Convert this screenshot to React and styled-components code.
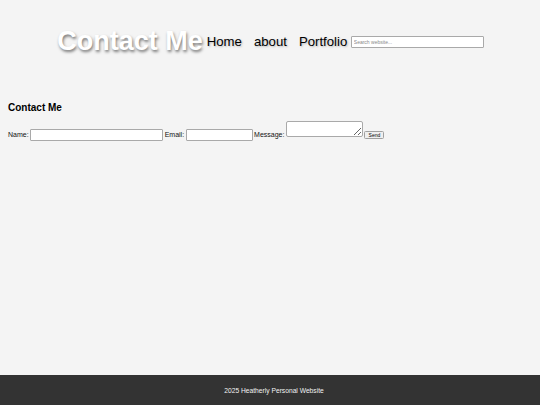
import React from 'react';
import styled, {createGlobalStyle} from 'styled-components';

const GlobalStyle = createGlobalStyle`
  html, body {
    margin: 0;
    padding: 0;
    background: #f4f4f4;
    font-family: "Liberation Sans", Arial, sans-serif;
  }
`;

const Page = styled.div`
  min-height: 100vh;
  display: flex;
  flex-direction: column;
`;

const Header = styled.header`
  display: flex;
  justify-content: center;
  align-items: center;
  padding: 26px 0 26px 1px;
`;

const Title = styled.h1`
  margin: 0 4px 0 0;
  font-size: 27px;
  font-weight: bold;
  line-height: 31px;
  color: #fff;
  text-shadow: 1px 2px 3px rgba(0, 0, 0, 0.5);
`;

const Nav = styled.nav`
  display: flex;
  gap: 12px;
  margin-right: 3.5px;
`;

const NavLink = styled.a`
  font-size: 13.2px;
  line-height: 16px;
  color: #000;
  text-decoration: none;
  text-shadow: 1px 1px 2px rgba(0, 0, 0, 0.25);
`;

const Search = styled.input`
  box-sizing: border-box;
  width: 133px;
  height: 12px;
  margin: 0;
  padding: 0 2px;
  border: 1px solid #a9a9a9;
  border-radius: 1px;
  background: #fff;
  font-family: inherit;
  font-size: 5px;
  &::placeholder {
    color: #8a8a8a;
  }
`;

const Main = styled.main`
  flex: 1;
  padding: 0 8px;
`;

const Heading = styled.h2`
  margin: 19px 0 7px;
  font-size: 10px;
  line-height: 12px;
  font-weight: bold;
  color: #000;
`;

const Form = styled.form`
  font-size: 7px;
  line-height: 8px;
  color: #111;
`;

const Label = styled.label`
  margin-right: 1.5px;
`;

const Field = styled.input`
  box-sizing: border-box;
  width: ${p => p.$width}px;
  height: 12px;
  margin: 0 1.5px 0 0;
  padding: 1px 2px;
  border: 1px solid #a9a9a9;
  border-radius: 1px;
  background: #fff;
  font-family: inherit;
  font-size: 7px;
  vertical-align: baseline;
`;

const Message = styled.textarea`
  box-sizing: border-box;
  width: 77px;
  height: 16px;
  margin: 0 1.5px 0 0;
  padding: 1px 2px;
  border: 1px solid #a9a9a9;
  border-radius: 2px;
  background: #fff;
  font-family: inherit;
  font-size: 7px;
`;

const SendButton = styled.button`
  box-sizing: border-box;
  width: 20px;
  height: 8.5px;
  margin: 0;
  padding: 0;
  border: 1px solid #a0a0a0;
  border-radius: 1.5px;
  background: #efefef;
  font-family: inherit;
  font-size: 5px;
  line-height: 6px;
  color: #000;
`;

const Footer = styled.footer`
  height: 30px;
  display: flex;
  justify-content: center;
  align-items: center;
  padding-left: 8px;
  background: #333;
  color: #f2f2f2;
  font-size: 6.7px;
`;

const App = () => {
  return (
    <Page>
      <GlobalStyle/>
      <Header>
        <Title>Contact Me</Title>
        <Nav>
          <NavLink href="#">Home</NavLink>
          <NavLink href="#">about</NavLink>
          <NavLink href="#">Portfolio</NavLink>
        </Nav>
        <Search type="text" placeholder="Search website..."/>
      </Header>
      <Main>
        <Heading>Contact Me</Heading>
        <Form onSubmit={e => e.preventDefault()}>
          <Label htmlFor="name">Name:</Label>
          <Field id="name" type="text" $width={133}/>
          <Label htmlFor="email">Email:</Label>
          <Field id="email" type="email" $width={67}/>
          <Label htmlFor="message">Message:</Label>
          <Message id="message"/>
          <SendButton type="submit">Send</SendButton>
        </Form>
      </Main>
      <Footer>2025 Heatherly Personal Website</Footer>
    </Page>
  );
}

export default App;
